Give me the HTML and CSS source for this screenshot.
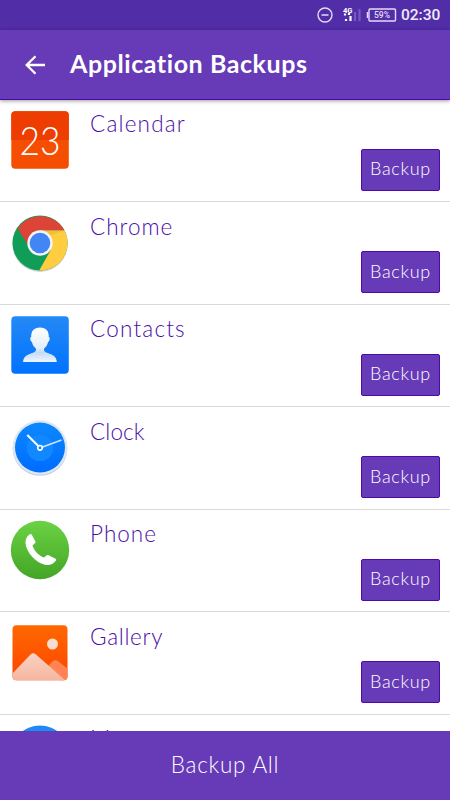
FILE: index.html
```html
<!DOCTYPE html>
<html lang="en">

<head>
  <meta charset="UTF-8">
  <meta name="viewport" content="width=device-width, initial-scale=1.0">
  <title>Application Backups</title>
  <link rel="stylesheet" href="styles.css">
</head>

<body>
  <div class="screen">
    <div class="status-bar">
      <svg class="status-icons" width="84" height="30" viewBox="0 0 84 30">
        <circle cx="10" cy="15" r="7" fill="none" stroke="#e4dcf4" stroke-width="1.4" />
        <path d="M6.5 15h7" stroke="#e4dcf4" stroke-width="1.5" />
        <text class="network" x="28" y="12.5" textLength="9.5" lengthAdjust="spacingAndGlyphs">4G</text>
        <path d="M31 21v-2M35.500 21v-5M30 15.500v-2M34 15v-2" stroke="#fff" stroke-width="2.200" />
        <path d="M40 21v-9M44.500 21V9" stroke="#7958bb" stroke-width="2.200" />
        <rect x="54" y="9" width="26.500" height="12" rx="1" fill="none" stroke="#e4dcf4" stroke-width="1.400" />
        <path d="M52.500 12v6" stroke="#e4dcf4" stroke-width="1.500" />
        <text class="percent" x="59" y="18" textLength="16" lengthAdjust="spacingAndGlyphs">59%</text>
      </svg>
      <span class="time">02:30</span>
    </div>

    <header class="toolbar">
      <svg class="back" width="20" height="20" viewBox="0 0 20 20">
        <path d="M20 10H2M10.500 1.200L1.700 10l8.800 8.800" fill="none" stroke="#fff" stroke-width="2.300" />
      </svg>
      <h1>Application Backups</h1>
    </header>

    <main class="app-list">
      <div class="app">
        <svg class="app-icon" viewBox="0 0 60 60">
          <rect x="1.300" y="1.300" width="57.500" height="57.500" rx="4" fill="#f54e00" />
          <path d="M1.300 30V5.300a4 4 0 0 1 4-4h49.500a4 4 0 0 1 4 4V30z" fill="#ee3d00" />
          <text class="day" x="9.500" y="45" textLength="41" lengthAdjust="spacingAndGlyphs">23</text>
        </svg>
        <span class="app-name calendar">Calendar</span>
        <button class="backup">Backup</button>
      </div>

      <div class="app">
        <svg class="app-icon" viewBox="0 0 60 60">
          <circle cx="30" cy="31.200" r="27.700" fill="#d2d2d2" />
          <circle cx="30" cy="30" r="27.500" fill="#0f9d58" />
          <path d="M7.500 15.500A27.500 27.500 0 0 1 54.500 17.400H30L17.500 31z" fill="#db4437" />
          <path d="M54.500 17.400A27.500 27.500 0 0 1 29.200 57.500L41 36.500 30 17.400z" fill="#ffcd40" />
          <path d="M30 17.400h24.500L41 22z" fill="#e9b52f" opacity=".6" />
          <circle cx="30" cy="30" r="12.700" fill="#f4f4f4" />
          <circle cx="30" cy="30" r="10.300" fill="#4285f4" />
        </svg>
        <span class="app-name chrome">Chrome</span>
        <button class="backup">Backup</button>
      </div>

      <div class="app">
        <svg class="app-icon" viewBox="0 0 60 60">
          <defs>
            <linearGradient id="contactsBg" x2="0" y2="1">
              <stop stop-color="#2489f5" />
              <stop offset="1" stop-color="#0072ff" />
            </linearGradient>
            <linearGradient id="person" x2="0" y2="1">
              <stop stop-color="#fff" />
              <stop offset=".6" stop-color="#e3eefb" />
              <stop offset=".72" stop-color="#c2dbf5" />
              <stop offset="1" stop-color="#eef5fd" />
            </linearGradient>
          </defs>
          <rect x="1.300" y="1.300" width="57.500" height="57.500" rx="4" fill="url(#contactsBg)" />
          <path d="M30 12.500c-6 0-9 3.500-8.800 9.500-1.500.3-1 4.300.7 5 .8 3.200 2.200 5 4 6.500v2.300c-2 3.200-12.700 2.700-12.700 11.200h33.600c0-8.500-10.700-8-12.700-11.200v-2.300c1.800-1.500 3.200-3.300 4-6.500 1.700-.7 2.200-4.700.7-5 .2-6-2.800-9.500-8.800-9.500z" fill="url(#person)" />
        </svg>
        <span class="app-name contacts">Contacts</span>
        <button class="backup">Backup</button>
      </div>

      <div class="app">
        <svg class="app-icon" viewBox="0 0 60 60">
          <defs>
            <linearGradient id="clockBg" x2="0" y2="1">
              <stop stop-color="#0c88ff" />
              <stop offset="1" stop-color="#006cff" />
            </linearGradient>
          </defs>
          <circle cx="30" cy="30.500" r="27.300" fill="#b9cbe8" />
          <circle cx="30" cy="29.500" r="27.300" fill="#dfe7f3" />
          <circle cx="30" cy="29.500" r="25" fill="url(#clockBg)" />
          <circle cx="30" cy="29.800" r="13.300" fill="#1188ff" />
          <path d="M28.500 28.300L17.300 17" stroke="#fff" stroke-width="2" />
          <path d="M32 29.200L51.500 22" stroke="#cfe5ff" stroke-width="1.500" />
          <circle cx="30" cy="29.800" r="2.300" fill="#1188ff" stroke="#fff" stroke-width="1.600" />
        </svg>
        <span class="app-name clock">Clock</span>
        <button class="backup">Backup</button>
      </div>

      <div class="app">
        <svg class="app-icon" viewBox="0 0 60 60">
          <defs>
            <linearGradient id="phoneBg" x2="0" y2="1">
              <stop stop-color="#6bd243" />
              <stop offset="1" stop-color="#43a526" />
            </linearGradient>
          </defs>
          <circle cx="30" cy="30" r="29.200" fill="url(#phoneBg)" />
          <path d="M19.500 14.500c1-.8 1.800-.6 2.300.3l3.500 6.500c.5 1 .2 1.600-.6 2.200l-2.200 1.700c1.500 5.300 6 10.300 11.500 12.300l2.300-2c.8-.7 1.500-.8 2.300-.3l7 3.500c.8.5.8 1.300.2 2.100-2.500 3.500-6.500 5-11 4-9.500-2.300-18.300-12.500-19.300-21.500-.3-3.700 1.300-7 4-8.800z" fill="#fff" />
        </svg>
        <span class="app-name phone">Phone</span>
        <button class="backup">Backup</button>
      </div>

      <div class="app">
        <svg class="app-icon" viewBox="0 0 60 60">
          <defs>
            <linearGradient id="galleryBg" x2="0" y2="1">
              <stop stop-color="#ff6900" />
              <stop offset="1" stop-color="#fd4300" />
            </linearGradient>
            <linearGradient id="hill" x2="0" y2="1">
              <stop stop-color="#fbd2c3" />
              <stop offset="1" stop-color="#f5b5a0" />
            </linearGradient>
            <clipPath id="galleryClip">
              <rect x="2.500" y="2.300" width="55" height="55" rx="4" />
            </clipPath>
          </defs>
          <g clip-path="url(#galleryClip)">
            <rect width="60" height="60" fill="url(#galleryBg)" />
            <path d="M38 43l4.500-4.500c2-1.800 4-1.800 6 0L58 46v12H52z" fill="#ff8353" />
            <path d="M2 51L20.500 31.500c2-1.600 3.500-1.600 5.500 0L56 58H2z" fill="url(#hill)" />
          </g>
          <circle cx="42.500" cy="21" r="5.500" fill="#fbddd0" />
        </svg>
        <span class="app-name gallery">Gallery</span>
        <button class="backup">Backup</button>
      </div>

      <div class="app">
        <svg class="app-icon" viewBox="0 0 60 60">
          <circle cx="30" cy="30" r="29.500" fill="#2189f3" />
        </svg>
        <span class="app-name">M</span>
      </div>
    </main>

    <button class="backup-all">Backup All</button>
  </div>
</body>

</html>
```
FILE: styles.css
```css
* {
  box-sizing: border-box;
}

body {
  margin: 0;
  background: #fff;
  font-family: Lato, "Liberation Sans", sans-serif;
  font-weight: 300;
}

button {
  border: none;
  font-family: inherit;
  font-weight: 300;
  color: #fff;
  background: #673ab7;
}

.screen {
  display: flex;
  flex-direction: column;
  height: 800px;
  overflow: hidden;
}

.status-bar {
  display: flex;
  flex: none;
  align-items: center;
  justify-content: flex-end;
  height: 30px;
  padding-right: 10px;
  background: #512da8;
}

.status-icons {
  margin-right: 2px;
}

.network {
  font: 700 8px Roboto, sans-serif;
  fill: #fff;
}

.percent {
  font: 500 9px Roboto, sans-serif;
  fill: #e4dcf4;
}

.time {
  width: 39px;
  font: 500 15.5px/30px Roboto, sans-serif;
  color: #f0eafa;
}

.toolbar {
  display: flex;
  flex: none;
  align-items: center;
  height: 70px;
  padding-left: 25px;
  background: #673ab7;
  border-bottom: 1px solid #4d08a8;
  box-shadow: 0 1px 4px rgba(0, 0, 0, 0.4);
  z-index: 1;
}

.toolbar h1 {
  margin: -3px 0 0 25px;
  font-size: 25px;
  font-weight: 700;
  line-height: 30px;
  letter-spacing: 0.57px;
  color: #fff;
  white-space: nowrap;
}

.app-list {
  flex: 1;
  min-height: 0;
  margin-top: -0.4px;
  overflow: hidden;
}

.app {
  display: flex;
  height: 102.5px;
  padding: 10.4px 10px 0;
  border-bottom: 1px solid #d9d9d9;
}

.app-icon {
  flex: none;
  width: 60px;
  height: 60px;
}

.day {
  font-size: 39px;
  font-weight: 300;
  fill: #fff;
}

.app-name {
  flex: 1;
  margin-left: 20px;
  font-size: 22.5px;
  line-height: 28px;
  letter-spacing: 1px;
  color: #4a0da8;
}

.calendar,
.contacts {
  letter-spacing: 1.2px;
}

.clock {
  letter-spacing: 0.1px;
}

.gallery {
  letter-spacing: 0.7px;
}

.backup {
  width: 79px;
  height: 42px;
  margin-top: 38.9px;
  padding: 0 0 3px;
  border: 1px solid #4d0aa8;
  border-radius: 2px;
  font-size: 18px;
  letter-spacing: 0.7px;
}

.backup-all {
  flex: none;
  height: 69px;
  padding: 0 0 2px;
  font-size: 22.5px;
  letter-spacing: 0.75px;
}
```
